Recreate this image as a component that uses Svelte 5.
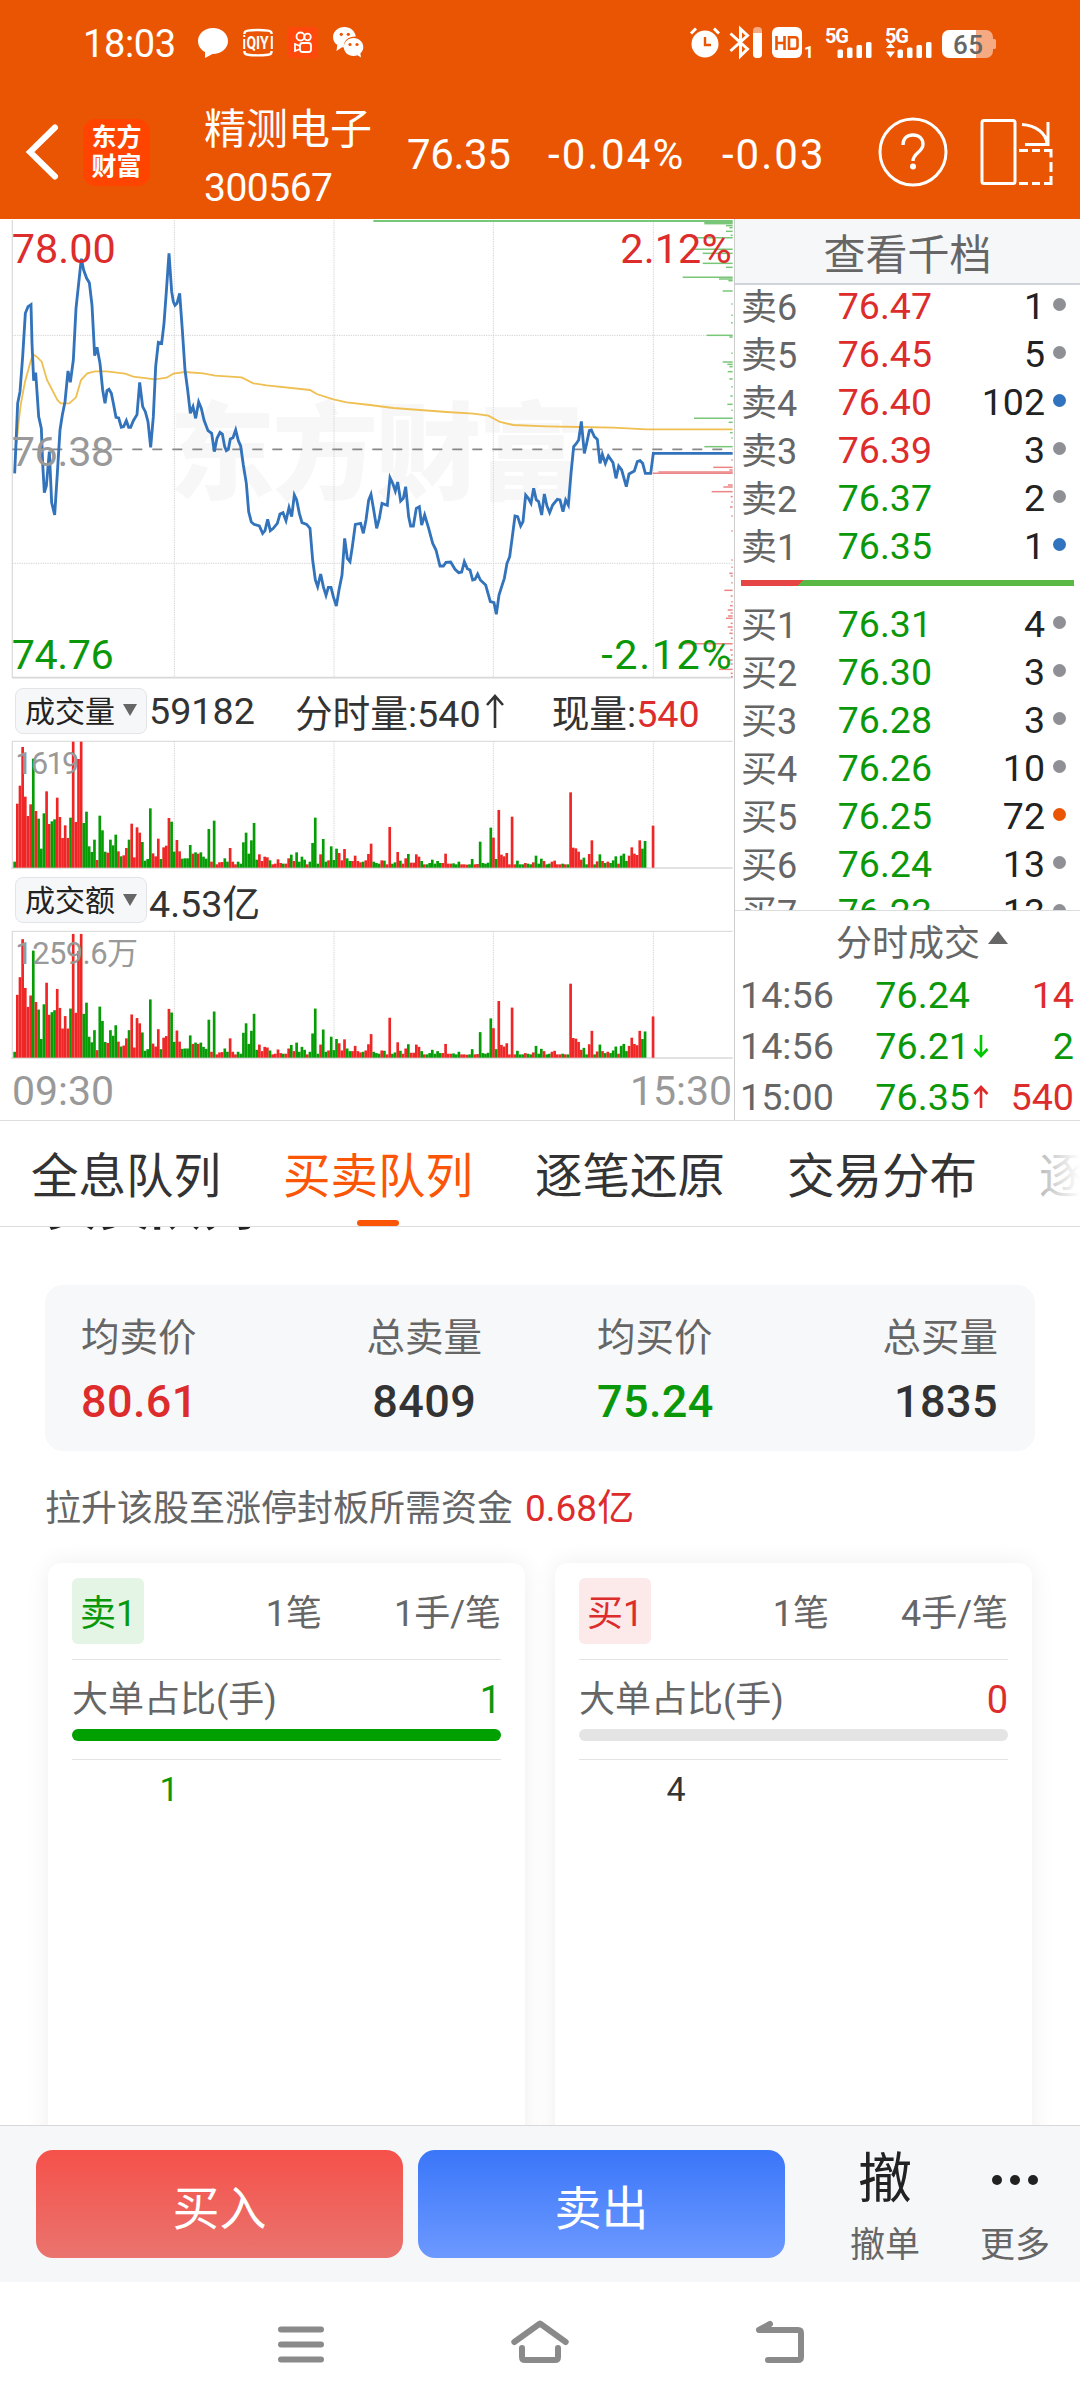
<script lang="ts">
  const sells = [
    { label: "卖6", price: "76.47", qty: 1, tone: "red", dot: "grey" },
    { label: "卖5", price: "76.45", qty: 5, tone: "red", dot: "grey" },
    { label: "卖4", price: "76.40", qty: 102, tone: "red", dot: "blue" },
    { label: "卖3", price: "76.39", qty: 3, tone: "red", dot: "grey" },
    { label: "卖2", price: "76.37", qty: 2, tone: "green", dot: "grey" },
    { label: "卖1", price: "76.35", qty: 1, tone: "green", dot: "blue" },
  ];

  const buys = [
    { label: "买1", price: "76.31", qty: 4, tone: "green", dot: "grey" },
    { label: "买2", price: "76.30", qty: 3, tone: "green", dot: "grey" },
    { label: "买3", price: "76.28", qty: 3, tone: "green", dot: "grey" },
    { label: "买4", price: "76.26", qty: 10, tone: "green", dot: "grey" },
    { label: "买5", price: "76.25", qty: 72, tone: "green", dot: "orange" },
    { label: "买6", price: "76.24", qty: 13, tone: "green", dot: "grey" },
    { label: "买7", price: "76.23", qty: 13, tone: "green", dot: "grey" },
  ];

  const trades = [
    { time: "14:56", price: "76.24", dir: "", qty: 14, tone: "red" },
    { time: "14:56", price: "76.21", dir: "down", qty: 2, tone: "green" },
    { time: "15:00", price: "76.35", dir: "up", qty: 540, tone: "red" },
  ];

  const tabs = ["全息队列", "买卖队列", "逐笔还原", "交易分布", "逐笔委托"];
  let active = $state(1);

  const queues = [
    { label: "卖1", side: "sell", count: "1笔", avg: "1手/笔", big: 1, pct: 100, first: 1 },
    { label: "买1", side: "buy", count: "1笔", avg: "4手/笔", big: 0, pct: 0, first: 4 },
  ];

  // charts are drawn at three units per pixel
  const gridX = [523, 1002, 1480, 1960];

  const priceLine =
    "44,790 48,700 53,580 60,545 68,440 76,310 84,290 93,284 96,400 101,512 107,488 112,560 116,620 124,655 128,760 133,848 139,828 148,725 155,878 164,915 172,790 180,660 187,615 195,575 204,483 211,517 220,450 228,295 236,220 244,146 251,180 260,205 268,218 276,285 284,437 291,412 300,460 308,540 315,580 321,542 327,538 334,550 340,580 348,622 356,624 364,652 371,650 379,632 386,652 392,652 400,632 411,614 419,517 428,590 436,605 444,635 452,712 460,620 467,470 475,397 485,400 492,340 499,245 507,130 515,245 520,275 525,286 531,280 539,250 547,360 555,480 563,540 571,610 579,590 587,625 596,576 604,595 612,630 624,662 635,670 643,725 651,685 660,667 667,672 674,710 679,722 685,718 691,687 699,683 707,660 715,692 722,708 730,765 739,820 746,905 754,936 762,943 778,948 788,970 795,962 803,928 811,962 820,955 832,940 840,912 849,908 858,932 867,893 875,920 883,855 890,870 898,910 906,938 920,943 930,955 938,1050 946,1110 953,1130 962,1092 970,1130 978,1156 985,1132 993,1132 1000,1160 1009,1188 1017,1140 1026,1095 1034,985 1042,1045 1050,1055 1057,1010 1066,943 1082,940 1090,970 1098,930 1106,870 1113,853 1122,905 1130,955 1138,925 1146,880 1162,886 1170,803 1178,820 1186,843 1193,816 1202,873 1210,865 1217,830 1226,920 1232,948 1240,948 1249,895 1258,890 1265,945 1274,915 1286,955 1298,1000 1308,1020 1320,1068 1330,1068 1338,1057 1352,1056 1365,1078 1376,1088 1385,1086 1393,1055 1402,1076 1410,1080 1418,1110 1425,1108 1433,1092 1441,1110 1457,1125 1471,1175 1482,1178 1489,1213 1497,1155 1505,1130 1513,1105 1521,1060 1529,1040 1537,980 1545,918 1553,920 1562,948 1569,935 1577,855 1585,865 1593,880 1601,835 1609,870 1616,875 1625,915 1633,852 1641,888 1649,908 1658,885 1672,868 1680,870 1689,905 1697,870 1705,885 1713,790 1721,710 1728,702 1736,690 1744,634 1753,730 1760,700 1768,662 1774,660 1783,680 1792,688 1800,760 1807,733 1816,760 1825,738 1839,758 1848,805 1856,768 1865,780 1879,830 1887,792 1903,783 1912,755 1920,752 1928,760 1936,790 1952,790 1960,730 2198,730";

  const avgLine =
    "50,700 55,645 62,585 75,515 93,450 100,434 110,440 125,455 141,510 172,570 182,580 208,580 228,562 243,510 262,490 285,484 320,484 375,491 400,500 465,508 500,503 520,491 555,486 610,490 645,497 725,502 760,520 800,526 930,540 950,552 1000,568 1040,577 1110,585 1180,594 1260,600 1340,606 1420,611 1465,617 1500,636 1540,645 1640,649 1740,651 1840,653 1940,658 2198,658";

  // [y, x] of each resting-order line, all end at the right edge
  const askDepth = [
    [37, 2113], [41, 2113], [47, 2178], [53, 2188], [64, 2178], [76, 2192], [83, 2085], [118, 2080], [130, 2108],
    [160, 2108], [172, 2178], [202, 2048], [207, 2157], [212, 2185], [243, 2168], [282, 2194], [316, 2194],
    [338, 2193], [376, 2120], [381, 2188], [430, 2194], [456, 2168], [463, 2182], [470, 2188], [485, 2183],
    [507, 2188], [530, 2194], [558, 2191], [583, 2182], [601, 2194], [625, 2082], [637, 2186], [668, 2190],
    [684, 2194], [710, 2113],
  ];
  const bidDepth = [
    [750, 2194], [772, 2140], [780, 2188], [786, 1975], [790, 1958], [825, 2184], [831, 2170], [845, 2135],
    [860, 2192], [876, 2194], [891, 2190], [918, 2194], [963, 2194], [1050, 2194], [1072, 2194], [1090, 2188],
    [1098, 2192], [1118, 2194], [1141, 2173], [1158, 2192], [1175, 2194], [1187, 2190], [1200, 2183], [1209, 2192],
    [1218, 2184], [1225, 2178], [1240, 2192], [1251, 2183], [1260, 2192], [1270, 2188], [1285, 2193], [1301, 2045],
    [1320, 2190], [1335, 2193], [1350, 2188], [1362, 2192], [1378, 2157], [1390, 2192], [1400, 2193],
  ];

  const bars =
    "g18 r192 r246 r362 r213 r155 r190 g327 r170 g147 g57 g163 r229 r131 g139 g145 r210 r152 r89 r127 r89 g150 r378 r137 r326 r378 g134 g168 g64 g47 g84 r23 g156 g112 g48 r45 g84 g67 g99 r49 g34 r37 r59 g84 r132 r31 r121 r105 g77 g21 g26 g178 r43 r34 r87 g26 r61 r66 r149 g138 g48 r83 r49 g27 g28 g28 g68 r42 g46 r42 g46 g33 g27 g116 r18 g141 r10 r16 r17 g28 g18 r59 r18 r10 g18 g12 g76 g105 g42 g82 g134 g24 r40 r20 r33 r31 g22 r10 r12 r25 r14 g12 r12 r28 g39 r20 g46 g18 g33 g24 r10 g18 g74 g150 g12 r40 g86 g18 r22 g64 g23 g57 r44 r22 r56 g28 g20 r20 r36 r20 r16 g18 r22 r41 r72 g18 g14 g12 r22 g21 r10 r122 g12 g16 r47 g21 r12 r28 g41 r15 r15 r40 r33 g20 r10 g10 g14 g24 g12 g20 g14 r14 r42 r12 r12 g13 g10 g18 r10 r10 r9 g10 g26 r10 r11 g78 g14 g12 g15 g120 r90 g26 r173 r39 r34 r44 r10 r153 r10 g21 g10 g10 r14 g12 g10 r16 g36 g12 g27 r20 g10 g12 r18 r21 r10 r10 g12 r10 g10 r226 r60 r58 r48 r24 g30 g10 r41 r82 g10 r19 g40 r20 g14 r18 g14 g22 g34 r12 g36 g42 g20 r36 r61 r42 r38 r82 g57 g80 g0 g0 r126"
      .split(" ")
      .map((s, i) => ({ x: 40 + i * 7.98, up: s[0] === "r", h: Number(s.slice(1)) }));

  // top label, its drawn width and the height factor of each histogram
  const volume = { max: "1619", width: 192, k: 1 };
  const amount = { max: "1259.6万", width: 368, k: 0.982 };
</script>

{#snippet histogram(c)}
  <svg class="hist" viewBox="0 0 2205 384">
    <path class="frame" d="M37 384V1H2198" />
    <path class="base" d="M34 381H2198" />
    {#each gridX as x}
      <path class="grid" d="M{x} 0V380" />
    {/each}
    {#each bars as b}
      <rect x={b.x} y={380 - b.h * c.k} width="8" height={b.h * c.k} fill={b.up ? "#ee2626" : "#059c05"} />
    {/each}
    <text x="46" y="98" font-size="93" textLength={c.width} fill="#999">{c.max}</text>
  </svg>
{/snippet}

{#snippet bookRow(r)}
  <div class="row">
    <span class="label">{r.label}</span>
    <span class="price {r.tone}">{r.price}</span>
    <span class="qty">{r.qty}</span>
    <i class="dot {r.dot}"></i>
  </div>
{/snippet}

{#snippet signal(arrows)}
  <svg width="48" height="32" viewBox="0 0 48 32">
    <text x="0" y="15.5" font-size="20" font-weight="700" textLength="24" fill="#fff">5G</text>
    {#if arrows}
      <path d="M1 21h9l-4.500-5zM1 24.500h9l-4.500 6z" fill="#fff" />
    {/if}
    <rect x="12.500" y="22.500" width="5.500" height="8.500" rx="1.500" fill="#fff" />
    <rect x="22" y="20.500" width="5.500" height="10.500" rx="1.500" fill="#fff" />
    <rect x="31.500" y="18" width="5.500" height="13" rx="1.500" fill="#fff" />
    <rect x="41" y="15" width="5.500" height="16" rx="1.500" fill="#fff" />
  </svg>
{/snippet}

<div class="screen">
  <header>
    <div class="status">
      <span class="clock">18:03</span>
      <div class="notes">
        <svg width="30" height="30" viewBox="0 0 30 30">
          <path d="M15 0C6.500 0 0 5.800 0 13c0 4.700 2.800 8.800 7 11.100V30l7.500-4C23.500 26 30 20.300 30 13S23.500 0 15 0z" fill="#fff" />
        </svg>
        <svg width="30" height="30" viewBox="0 0 30 30">
          <path d="M1.500 6V5C1.500 3 3 2.800 5 2.600Q15 1.400 25 2.600C27 2.800 28.500 3 28.500 5V6M1.500 23v1c0 2 1.500 2.600 3.500 2.800q10 1.200 20 0c2-.2 3.500-.8 3.500-2.800V23" fill="none" stroke="#fff" stroke-width="2.400" />
          <path d="M1.200 11v10M28.800 8v13M1.200 7v2" stroke="#fff" stroke-width="2" />
          <text x="3.500" y="21" font-size="18" font-weight="700" textLength="22" lengthAdjust="spacingAndGlyphs" fill="#fff">QIY</text>
        </svg>
        <svg width="30" height="31" viewBox="0 0 30 31">
          <rect width="30" height="31" rx="3" fill="#ff480c" />
          <g fill="none" stroke="#fff" stroke-width="1.800">
            <circle cx="12.500" cy="9.500" r="4" />
            <circle cx="19.500" cy="10" r="3.300" />
            <rect x="12" y="16" width="11" height="9" rx="2.500" />
            <path d="M12 19l-5-2v7l5-2" />
          </g>
        </svg>
        <svg width="31" height="31" viewBox="0 0 31 31">
          <path d="M11.500 0C5 0 0 4.500 0 10.200c0 3.300 1.700 6 4.300 7.900L3.500 24l5.500-3.700 2 .2C10 14 15 9.800 22.800 9.600 22 4 17.500 0 11.500 0z" fill="#fff" />
          <path d="M20.500 11c-5.500 0-9.700 4-9.700 9s4.200 9 9.700 9c1.500 0 2.900-.3 4-.8l3.500 2.300-.6-4.200c1.900-1.600 2.900-3.900 2.900-6.300 0-5-4.300-9-9.800-9z" fill="#fff" />
          <g fill="#ea5503">
            <circle cx="8.300" cy="7.300" r="1.600" /><circle cx="15.300" cy="7.300" r="1.600" />
            <circle cx="17" cy="17.500" r="1.600" /><circle cx="24" cy="17.500" r="1.600" />
          </g>
        </svg>
      </div>
      <div class="system">
        <svg width="30" height="31" viewBox="0 0 30 31">
          <circle cx="15" cy="17" r="13.500" fill="#fff" />
          <path d="M1 6.500l5-5M29 6.500l-5-5" stroke="#fff" stroke-width="3" />
          <path d="M15 10v8h6" fill="none" stroke="#ea5503" stroke-width="2.400" />
        </svg>
        <svg width="34" height="31" viewBox="0 0 34 31">
          <path d="M1.500 6.500L18.500 22 11.500 29V2l7 6.500L1.500 24" fill="none" stroke="#fff" stroke-width="3" />
          <rect x="24" y="0" width="9" height="31" rx="4" fill="#fff" opacity=".5" />
          <path d="M24 6h9v21a4 4 0 0 1-4 4h-1a4 4 0 0 1-4-4z" fill="#fff" />
        </svg>
        <svg width="41" height="31" viewBox="0 0 41 31">
          <rect width="30" height="31" rx="6" fill="#fff" />
          <path d="M4.500 9v14M12.500 9v14M4.500 16h8M17 10.200h6q2.500 0 2.500 2.500v6.600q0 2.500-2.500 2.500H17z" fill="none" stroke="#ea5503" stroke-width="2.600" />
          <text x="32" y="30.500" font-size="17" font-weight="700" fill="#fff">1</text>
        </svg>
        {@render signal(false)}
        {@render signal(true)}
        <svg width="54" height="28" viewBox="0 0 54 28">
          <path d="M33 0h11a7 7 0 0 1 7 7v2h1.500q1.500 0 1.500 1.500v7q0 1.500-1.500 1.500H51v2a7 7 0 0 1-7 7H33z" fill="#f5aa81" />
          <path d="M7 0h27v28H7a7 7 0 0 1-7-7V7a7 7 0 0 1 7-7z" fill="#fff" />
          <text x="11" y="23.500" font-size="26" font-weight="500" textLength="30" fill="#666">65</text>
        </svg>
      </div>
    </div>

    <div class="title">
      <svg class="back" width="33" height="56" viewBox="0 0 33 56">
        <path d="M29 3.500L4 28l25 24.500" fill="none" stroke="#fff" stroke-width="6" stroke-linecap="round" />
      </svg>
      <div class="logo"><span>东方</span><span>财富</span></div>
      <div class="stock">
        <span class="name">精测电子</span>
        <span class="code">300567</span>
      </div>
      <div class="quote">
        <span>76.35</span>
        <span>-0.04%</span>
        <span>-0.03</span>
      </div>
      <svg class="help" width="70" height="70" viewBox="0 0 70 70">
        <circle cx="35" cy="35" r="33" fill="none" stroke="#fff" stroke-width="3" />
        <path d="M25 28c0-6.500 4-10 10-10s10 3.700 10 9.200c0 8-10 8.500-10 16.800" fill="none" stroke="#fff" stroke-width="3.300" />
        <circle cx="35" cy="49.500" r="3" fill="#fff" />
      </svg>
      <svg width="74" height="66" viewBox="0 0 74 66">
        <g fill="none" stroke="#fff" stroke-width="3">
          <rect x="2" y="1.500" width="33" height="63" rx="2" />
          <path d="M42 5.500c14 1 24 8.500 25 19M45 25.500h23V3" />
          <path d="M39 31.500h9M52 31.500h8M64 31.500h7v7M71 43v10M71 57v7.500h-7M60 64.500h-8M48 64.500h-9" />
        </g>
      </svg>
    </div>
  </header>

  <section class="market">
    <div class="charts">
      <svg class="trend" viewBox="0 27 2205 1383">
        <text class="mark" x="508" y="842" font-size="318" textLength="1245">东方财富</text>
        <path class="frame" d="M37 30V1403" />
        <path class="base" d="M36 1403H2198" />
        {#each gridX as x}
          <path class="grid" d="M{x} 30V1400" />
        {/each}
        <path class="grid" d="M37 376H2198M37 1060H2198" />
        <path d="M37 718H2198" stroke="#888" stroke-width="5" stroke-dasharray="30 30" />
        <path d="M1120 33H2198" stroke="#78c678" stroke-width="6" />
        {#each askDepth as [y, x]}
          <path d="M{x} {y}H2198" stroke="#78c678" stroke-width="4.5" />
        {/each}
        {#each bidDepth as [y, x]}
          <path d="M{x} {y}H2198" stroke="#eb8585" stroke-width="4.5" />
        {/each}
        <polyline points={avgLine} fill="none" stroke="#efbf52" stroke-width="5.5" />
        <polyline points={priceLine} fill="none" stroke="#3273bb" stroke-width="8.5" />
        <g font-size="124">
          <text x="35" y="160" textLength="312" fill="#dd2c2c">78.00</text>
          <text x="35" y="767" textLength="308" fill="#999">76.38</text>
          <text x="35" y="1376" textLength="306" fill="#0a980a">74.76</text>
          <text x="1861" y="160" textLength="334" fill="#dd2c2c">2.12%</text>
          <text x="1804" y="1376" textLength="391" fill="#0a980a">-2.12%</text>
        </g>
      </svg>

      <div class="metric first">
        <span class="pill">成交量<i></i></span>
        <span>59182</span>
        <span class="minute">分时量:540<svg width="24" height="34" viewBox="0 0 24 34"><path d="M12 34V2M4 11l8-9 8 9" fill="none" stroke="#333" stroke-width="2.600" /></svg></span>
        <span>现量:<b class="red">540</b></span>
      </div>
      {@render histogram(volume)}

      <div class="metric">
        <span class="pill">成交额<i></i></span>
        <span>4.53亿</span>
      </div>
      {@render histogram(amount)}

      <div class="times"><span>09:30</span><span>15:30</span></div>
    </div>

    <aside>
      <div class="more">查看千档</div>
      <div class="book">
        {#each sells as r}
          {@render bookRow(r)}
        {/each}
        <div class="ratio"></div>
        {#each buys as r}
          {@render bookRow(r)}
        {/each}
      </div>
      <div class="deals">
        <div class="deals-head">分时成交<i></i></div>
        {#each trades as t}
          <div class="deal">
            <span class="time">{t.time}</span>
            <span class="price green">{t.price}</span>
            <span class="dir">
              {#if t.dir === "up"}
                <svg width="16" height="24" viewBox="0 0 16 24"><path d="M8 23V2M1.500 9L8 2l6.500 7" fill="none" stroke="#e02a2a" stroke-width="2.600" /></svg>
              {:else if t.dir === "down"}
                <svg width="16" height="24" viewBox="0 0 16 24"><path d="M8 1v21M1.500 15L8 22l6.500-7" fill="none" stroke="#00c800" stroke-width="2.600" /></svg>
              {/if}
            </span>
            <span class="vol {t.tone}">{t.qty}</span>
          </div>
        {/each}
      </div>
    </aside>
  </section>

  <nav class="tabs">
    {#each tabs as tab, i}
      <button class:active={i === active} onclick={() => (active = i)}>{tab}</button>
    {/each}
  </nav>

  <main>
    <h2>买卖队列</h2>
    <div class="summary">
      <div class="pair">
        <div><span>均卖价</span><strong class="red">80.61</strong></div>
        <div class="mid"><span>总卖量</span><strong>8409</strong></div>
      </div>
      <div class="pair">
        <div><span>均买价</span><strong class="green">75.24</strong></div>
        <div class="end"><span>总买量</span><strong>1835</strong></div>
      </div>
    </div>
    <p>拉升该股至涨停封板所需资金<em>0.68亿</em></p>
    <div class="queues">
      {#each queues as q}
        <div class="queue {q.side}">
          <div class="top">
            <span class="badge">{q.label}</span>
            <span class="count">{q.count}</span>
            <span class="avg">{q.avg}</span>
          </div>
          <div class="big"><span>大单占比(手)</span><b>{q.big}</b></div>
          <div class="bar"><div style="width: {q.pct}%"></div></div>
          <div class="orders"><span>{q.first}</span></div>
        </div>
      {/each}
    </div>
  </main>

  <footer>
    <button class="trade buy">买入</button>
    <button class="trade sell">卖出</button>
    <div class="tool"><span class="glyph">撤</span><span>撤单</span></div>
    <div class="tool">
      <span class="glyph"><i></i><i></i><i></i></span>
      <span>更多</span>
    </div>
  </footer>

  <div class="system-nav">
    <svg width="46" height="44" viewBox="0 0 46 44">
      <path d="M3 9.500h40M3 24.500h40M3 39.500h40" stroke="#8a8a8a" stroke-width="6" stroke-linecap="round" />
    </svg>
    <svg width="58" height="44" viewBox="0 0 58 44">
      <g fill="none" stroke="#8a8a8a" stroke-width="6" stroke-linecap="round" stroke-linejoin="round">
        <path d="M3.300 22L29 3.500 54.700 22" />
        <path d="M11 28v9q0 3 3 3h30q3 0 3-3V28" />
      </g>
    </svg>
    <svg width="48" height="44" viewBox="0 0 48 44">
      <path d="M14 4L3 10h39q3 0 3 3v24q0 3-3 3H12" fill="none" stroke="#8a8a8a" stroke-width="6" stroke-linecap="round" stroke-linejoin="round" />
    </svg>
  </div>
</div>

<style>
  :global(body) {
    background: #fff;
  }

  .screen {
    width: 1080px;
    height: 2408px;
    display: flex;
    flex-direction: column;
    overflow: hidden;
    font-family: Roboto, "Noto Sans CJK SC", sans-serif;
    font-size: 36px;
    color: #333;
  }

  svg {
    display: block;
    flex: none;
    overflow: visible;
  }

  button {
    border: 0;
    padding: 0;
    background: none;
    font: inherit;
    color: inherit;
  }

  i, em {
    font-style: normal;
  }

  .red {
    color: #dd2c2c;
  }

  .green {
    color: #0a980a;
  }

  header {
    height: 219px;
    flex: none;
    background: #ea5503;
    color: #fff;
  }

  .status {
    display: flex;
    align-items: center;
    height: 85px;
    padding: 0 84px 0 83px;
  }

  .clock {
    width: 115px;
    padding-top: 2px;
    font-size: 38px;
    letter-spacing: -0.4px;
  }

  .notes {
    display: flex;
    gap: 15px;
    align-items: center;
  }

  .system {
    display: flex;
    align-items: center;
    gap: 9px;
    margin-left: auto;
  }

  .system svg:nth-child(4) {
    margin-left: 3px;
  }

  .system svg:nth-child(5) {
    margin-left: 3px;
  }

  .system svg:last-child {
    margin-top: 3px;
  }

  .title {
    display: flex;
    align-items: center;
    height: 134px;
    padding: 0 25px 0 26px;
    box-sizing: border-box;
  }

  .logo {
    display: flex;
    flex-direction: column;
    justify-content: center;
    align-items: center;
    width: 67px;
    height: 67px;
    margin-left: 24px;
    border-radius: 13px;
    background: #ff4400;
    font-size: 25px;
    line-height: 29px;
    font-weight: 700;
  }

  .stock {
    display: flex;
    flex-direction: column;
    width: 203px;
    margin-left: 54px;
    padding-top: 14px;
  }

  .name {
    font-size: 42px;
    line-height: 59px;
  }

  .code {
    font-size: 39px;
    line-height: 59px;
    letter-spacing: -0.5px;
  }

  .quote {
    display: flex;
    width: 471px;
    padding-top: 5px;
    font-size: 42px;
  }

  .quote span:nth-child(1) {
    width: 141px;
    letter-spacing: -0.4px;
  }

  .quote span:nth-child(2) {
    width: 174px;
    letter-spacing: 2.2px;
  }

  .quote span:nth-child(3) {
    letter-spacing: 2px;
  }

  .help {
    margin-right: 32px;
  }

  .market {
    display: flex;
    height: 901px;
    flex: none;
    border-bottom: 1px solid #ddd;
  }

  .charts {
    width: 734px;
    display: flex;
    flex-direction: column;
  }

  .trend {
    width: 735px;
    height: 461px;
  }

  .hist {
    width: 735px;
    height: 128px;
  }

  .mark {
    font-weight: 900;
    fill: #f7f7f7;
  }

  .frame {
    fill: none;
    stroke: #ddd;
    stroke-width: 4;
  }

  .base {
    stroke: #d8d8d8;
    stroke-width: 5;
  }

  .grid {
    stroke: #d4d4d4;
    stroke-width: 3;
    stroke-dasharray: 4 3;
  }

  .metric {
    display: flex;
    align-items: center;
    height: 62px;
    padding-left: 15px;
    font-size: 37.7px;
    white-space: nowrap;
  }

  .metric.first {
    height: 61px;
  }

  .metric b {
    font-weight: 400;
  }

  .pill {
    display: flex;
    align-items: center;
    width: 132px;
    height: 46px;
    padding: 0 0 4px 9px;
    margin-right: 2px;
    box-sizing: border-box;
    border: 1px solid #e2e4e8;
    border-radius: 8px;
    background: #f6f7f9;
    color: #222;
    font-size: 30px;
  }

  .pill i {
    margin: 3px 0 0 8px;
    border: 7.5px solid transparent;
    border-top: 12px solid #666;
    border-bottom: 0;
  }

  .minute {
    display: flex;
    align-items: center;
    margin: 0 45px 0 40px;
  }

  .minute svg {
    margin-left: 2px;
  }

  .times {
    display: flex;
    justify-content: space-between;
    align-items: center;
    flex: 1;
    padding: 2px 2px 0 12px;
    font-size: 41px;
    color: #999;
  }

  aside {
    flex: 1;
    border-left: 1px solid #ccc;
  }

  .more {
    height: 64px;
    line-height: 74px;
    border-bottom: 2px solid #d0d3d9;
    background: #f6f7f9;
    color: #666;
    font-size: 42px;
    text-align: center;
  }

  .book {
    display: flex;
    flex-direction: column;
    height: 625px;
    overflow: hidden;
    border-bottom: 1px solid #ddd;
  }

  .row {
    display: flex;
    align-items: center;
    height: 48px;
    flex: none;
    padding: 0 14px 0 6px;
  }

  .row:first-child {
    margin-top: -3px;
  }

  .label {
    width: 60px;
    padding-bottom: 4px;
    color: #666;
  }

  .row .price {
    width: 131px;
    text-align: right;
  }

  .row .price,
  .qty {
    font-size: 37.5px;
  }

  .qty {
    flex: 1;
    text-align: right;
    color: #222;
  }

  .dot {
    width: 13px;
    height: 13px;
    margin: 0 0 4px 8px;
    border-radius: 50%;
    background: #8f8f96;
  }

  .dot.blue {
    background: #3273bf;
  }

  .dot.orange {
    background: #ea5503;
  }

  .ratio {
    height: 6px;
    flex: none;
    margin: 10px 6px 14px;
    background: linear-gradient(135deg, #e54545 44px, #5ab844 44px);
  }

  .deals {
    height: 209px;
  }

  .deals-head {
    display: flex;
    align-items: center;
    height: 57px;
    margin-bottom: 1px;
    padding-left: 101px;
    color: #666;
  }

  .deals-head i {
    margin-left: 8px;
    margin-bottom: 5px;
    border: 10.5px solid transparent;
    border-bottom: 13px solid #666;
    border-top: 0;
  }

  .deal {
    display: flex;
    align-items: center;
    height: 51px;
    padding: 0 6px 0 5px;
    font-size: 37.7px;
  }

  .time {
    width: 110px;
    color: #666;
  }

  .deal .price {
    width: 120px;
    text-align: right;
  }

  .dir {
    width: 16px;
    margin-left: 3px;
  }

  .vol {
    flex: 1;
    text-align: right;
  }

  .tabs {
    position: relative;
    display: flex;
    gap: 62px;
    height: 106px;
    flex: none;
    padding-left: 31px;
    border-bottom: 1px solid #ddd;
    box-sizing: border-box;
    overflow: hidden;
  }

  .tabs::after {
    content: "";
    position: absolute;
    right: 0;
    top: 0;
    width: 60px;
    height: 100%;
    background: linear-gradient(90deg, rgba(255, 255, 255, 0.5), #fff);
  }

  .tabs button {
    position: relative;
    flex: none;
    height: 105px;
    padding-top: 7px;
    box-sizing: border-box;
    font-size: 47.5px;
    line-height: 98px;
  }

  .tabs .active {
    color: #fb5607;
  }

  .tabs .active::after {
    content: "";
    position: absolute;
    left: 74px;
    bottom: 0;
    width: 42px;
    height: 6px;
    border-radius: 3px;
    background: #fb5607;
  }

  main {
    flex: 1;
    min-height: 0;
    overflow: hidden;
  }

  h2 {
    margin: -45px 0 51px 46px;
    font-size: 52px;
    line-height: 52px;
    font-weight: 700;
    color: #222;
  }

  .summary {
    display: flex;
    justify-content: space-between;
    height: 166px;
    margin: 0 45px;
    padding: 0 37px 0 36px;
    box-sizing: border-box;
    border-radius: 18px;
    background: #f7f8fa;
  }

  .pair {
    display: flex;
    justify-content: space-between;
    width: 401px;
  }

  .pair div {
    display: flex;
    flex-direction: column;
    padding-top: 23px;
  }

  .pair .mid {
    align-items: center;
  }

  .pair .end {
    align-items: flex-end;
  }

  .pair span {
    font-size: 38.5px;
    line-height: 60px;
    color: #666;
  }

  .pair strong {
    font-size: 45px;
    line-height: 68px;
    font-weight: 500;
    letter-spacing: 0.4px;
  }

  p {
    margin: 0 0 0 45px;
    padding-top: 4px;
    line-height: 107px;
    color: #666;
  }

  em {
    margin-left: 12px;
    font-size: 37px;
    color: #dd2c2c;
  }

  .queues {
    display: flex;
    gap: 30px;
    padding: 0 48px;
  }

  .queue {
    flex: 1;
    height: 620px;
    padding: 15px 24px;
    border-radius: 13px;
    background: #fff;
    box-shadow: 0 0 24px rgba(0, 0, 0, 0.07);
    color: #666;
  }

  .top {
    display: flex;
    align-items: flex-start;
    height: 81px;
    border-bottom: 1px solid #e4e4e4;
    line-height: 73px;
  }

  .badge {
    width: 72px;
    height: 66px;
    border-radius: 6px;
    text-align: center;
  }

  .count {
    width: 178px;
    text-align: right;
  }

  .avg {
    flex: 1;
    text-align: right;
  }

  .sell .badge {
    background: #e5f5e5;
  }

  .buy .badge {
    background: #fce9e9;
  }

  .sell .badge,
  .sell b {
    color: #0a980a;
  }

  .buy .badge,
  .buy b {
    color: #dd2c2c;
  }

  .big {
    display: flex;
    justify-content: space-between;
    height: 69px;
    line-height: 81px;
  }

  .big b {
    font-size: 38px;
    font-weight: 400;
  }

  .bar {
    height: 12px;
    border-radius: 6px;
    background: #e4e4e4;
    overflow: hidden;
  }

  .bar div {
    height: 100%;
    background: #00a000;
  }

  .orders {
    margin-top: 18px;
    border-top: 1px solid #e4e4e4;
    font-size: 34px;
    line-height: 59px;
  }

  .orders span {
    display: block;
    width: 194px;
    text-align: center;
    color: #333;
  }

  .sell .orders span {
    color: #0a980a;
  }

  footer {
    display: flex;
    align-items: center;
    height: 156px;
    flex: none;
    padding-left: 36px;
    border-top: 1px solid #d8d8d8;
    background: #f6f7f9;
  }

  .trade {
    width: 367px;
    height: 108px;
    margin-right: 15px;
    border-radius: 17px;
    color: #fff;
    font-size: 47px;
  }

  .trade.buy {
    background: linear-gradient(#f5514a, #ea746e);
  }

  .trade.sell {
    background: linear-gradient(#3a76f9, #6d99ff);
    margin-right: 35px;
  }

  .tool {
    display: flex;
    flex-direction: column;
    align-items: center;
    width: 130px;
    padding-top: 9px;
    font-size: 35px;
    line-height: 56px;
    color: #666;
  }

  .glyph {
    display: flex;
    gap: 8px;
    align-items: center;
    height: 72px;
    margin-bottom: 2px;
    font-size: 54px;
    color: #222;
  }

  .glyph i {
    width: 10px;
    height: 10px;
    border-radius: 50%;
    background: #222;
  }

  .system-nav {
    display: flex;
    align-items: center;
    gap: 187px;
    height: 126px;
    flex: none;
    padding: 0 0 7px 278px;
    box-sizing: border-box;
    background: #fff;
  }
</style>
